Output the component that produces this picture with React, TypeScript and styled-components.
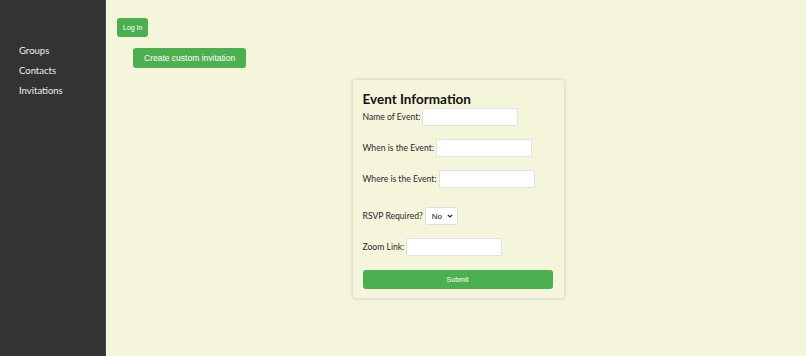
import React from "react";
import styled, { createGlobalStyle } from "styled-components";

const GlobalStyle = createGlobalStyle`
  html, body {
    margin: 0;
    padding: 0;
    height: 100%;
    background-color: #f5f5dc;
    font-family: Lato, "Open Sans", sans-serif;
  }
  #root {
    height: 100%;
  }
`;

const Page = styled.div`
  display: flex;
  min-height: 356px;
`;

const Sidebar = styled.nav`
  width: 105px;
  background-color: #333333;
  border-right: 1px solid #4a4a4a;
  padding-top: 43px;
  display: flex;
  flex-direction: column;
  gap: 4px;
`;

const NavLink = styled.a`
  display: block;
  padding: 0 0 0 19px;
  line-height: 16px;
  font-size: 9.5px;
  color: #f0f0f0;
  text-decoration: none;
`;

const Main = styled.main`
  flex: 1;
  display: flex;
  flex-direction: column;
  align-items: flex-start;
  padding: 18px 0 0 11px;
`;

const GreenButton = styled.button<{ $size?: "small" | "medium" }>`
  background-color: #4caf50;
  color: white;
  border: none;
  border-radius: 3px;
  font-family: "Liberation Sans", Arial, sans-serif;
  cursor: pointer;
  font-size: ${(p) => (p.$size === "small" ? "7px" : "8.5px")};
  height: ${(p) => (p.$size === "small" ? "19px" : "20px")};
  padding: ${(p) => (p.$size === "small" ? "0 6px" : "0 11px")};
`;

const CreateButton = styled(GreenButton)`
  margin: 11px 0 0 16px;
`;

const CardWrap = styled.div`
  align-self: stretch;
  display: flex;
  justify-content: center;
  margin-top: 11px;
  padding-right: 7px;
`;

const Card = styled.form`
  width: 190px;
  padding: 10px 11px 9px 10px;
  border: 1px solid #e3e3cc;
  border-radius: 3px;
  box-shadow: 0 0 3px rgba(0, 0, 0, 0.12);
`;

const Title = styled.h2`
  margin: 0;
  font-size: 13.5px;
  line-height: 18px;
  font-weight: 700;
  color: #111;
`;

const Field = styled.div<{ $gap?: number }>`
  display: flex;
  align-items: center;
  margin-top: ${(p) => p.$gap ?? 13}px;
  font-size: 8.6px;
  color: #2a2a2a;
`;

const TextInput = styled.input`
  margin-left: 2px;
  width: 96px;
  height: 18px;
  box-sizing: border-box;
  border: 1px solid #e0e0e0;
  border-radius: 2px;
  background: white;
  padding: 0 4px;
  font-size: 8px;
`;

const SelectWrap = styled.div`
  position: relative;
  margin-left: 2px;
  width: 33px;
  height: 18px;
`;

const Select = styled.select`
  appearance: none;
  width: 100%;
  height: 100%;
  box-sizing: border-box;
  border: 1px solid #e0e0e0;
  border-radius: 2px;
  background: white;
  padding: 0 0 0 6px;
  font-size: 8px;
  color: #111;
  font-family: "Liberation Sans", Arial, sans-serif;
`;

const Chevron = styled.svg`
  position: absolute;
  right: 5px;
  top: 7px;
  pointer-events: none;
`;

const SubmitButton = styled(GreenButton)`
  display: block;
  width: 100%;
  margin-top: 14px;
  font-size: 7px;
  height: 19px;
`;

export default function App() {
  return (
    <>
      <GlobalStyle />
      <Page>
        <Sidebar>
          <NavLink href="#">Groups</NavLink>
          <NavLink href="#">Contacts</NavLink>
          <NavLink href="#">Invitations</NavLink>
        </Sidebar>
        <Main>
          <GreenButton $size="small">Log In</GreenButton>
          <CreateButton>Create custom invitation</CreateButton>
          <CardWrap>
            <Card onSubmit={(e) => e.preventDefault()}>
              <Title>Event Information</Title>
              <Field $gap={0}>
                Name of Event: <TextInput type="text" />
              </Field>
              <Field>
                When is the Event: <TextInput type="text" />
              </Field>
              <Field>
                Where is the Event: <TextInput type="text" />
              </Field>
              <Field $gap={19}>
                RSVP Required?{" "}
                <SelectWrap>
                  <Select defaultValue="No">
                    <option>No</option>
                    <option>Yes</option>
                  </Select>
                  <Chevron width="6" height="4" viewBox="0 0 6 4">
                    <path d="M0.8 0.8 L3 3 L5.2 0.8" fill="none" stroke="#222" strokeWidth="1.2" />
                  </Chevron>
                </SelectWrap>
              </Field>
              <Field>
                Zoom Link: <TextInput type="text" />
              </Field>
              <SubmitButton type="submit">Submit</SubmitButton>
            </Card>
          </CardWrap>
        </Main>
      </Page>
    </>
  );
}
